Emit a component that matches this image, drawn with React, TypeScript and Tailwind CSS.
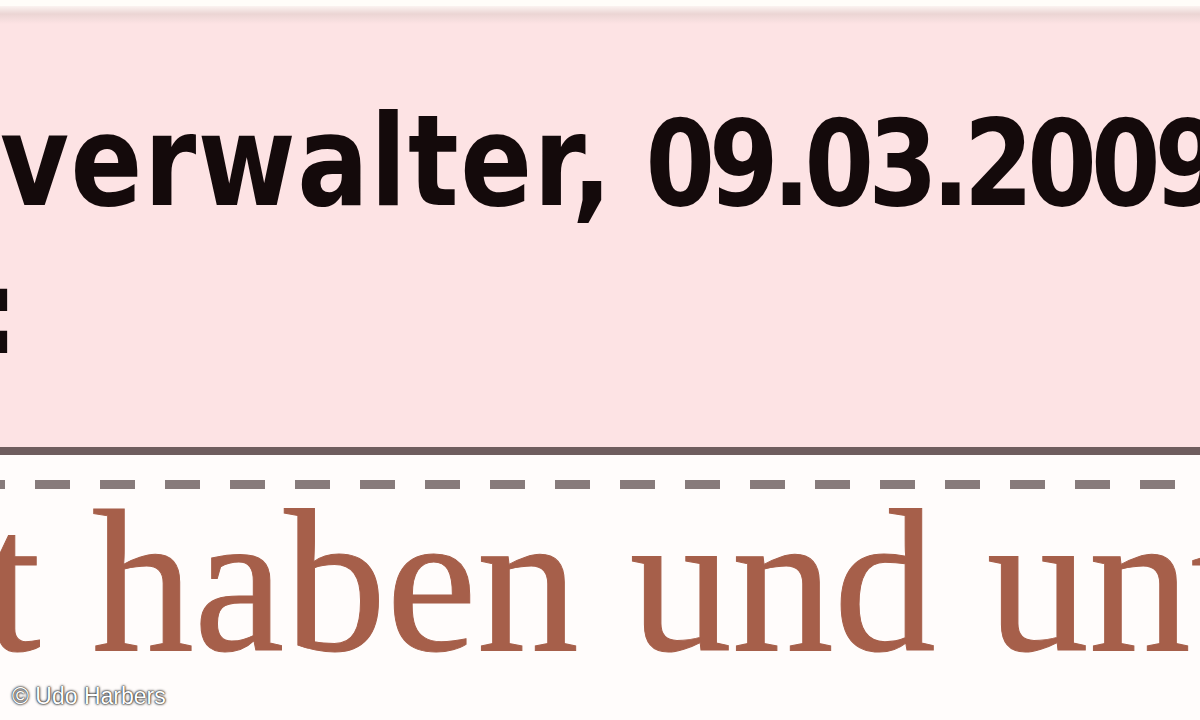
export default function App() {
  return (
    <div className="relative w-[1200px] h-[720px] overflow-hidden bg-[#fffcfb]">
      {/* top edge */}
      <div className="h-[6px] bg-[#fffdf9]" />
      <div className="h-[8px] bg-gradient-to-b from-[#fbf3f0] to-[#ebd5d4]" />
      <div className="h-[10px] bg-gradient-to-b from-[#ebd5d4] to-[#fde3e4]" />

      {/* pink header block */}
      <div className="h-[423px] bg-[#fde3e4] pt-[75px] font-['DejaVu_Sans',sans-serif] font-bold text-[#140a0b]">
        <div className="text-[100px] leading-none whitespace-nowrap origin-top scale-y-[1.19] [word-spacing:-3px]">
          <span className="text-[106px] tracking-[1.5px]">verwalter,</span> <span className="tracking-[-6px]">09.03.2009</span>
        </div>
        <div className="mt-[48px] w-[18px] flex justify-end">
          <span className="h-[118px] text-[118px] leading-none whitespace-nowrap origin-right scale-x-[0.85]">
            Betreff:
          </span>
        </div>
      </div>

      {/* rule */}
      <div className="h-[8px] bg-[#6f5d5e]" />

      {/* dashed separator */}
      <div className="mt-[25px] h-[9px] bg-[repeating-linear-gradient(90deg,#877b7b_0px,#877b7b_5px,transparent_5px,transparent_35px,#877b7b_35px,#877b7b_65px)]" />

      {/* body text */}
      <div className="mt-[27px] ml-[-16px] h-[130px] text-[204px] leading-[130px] whitespace-nowrap font-['Liberation_Serif',serif] text-[#a65f4a] [-webkit-text-stroke:1px_#a65f4a]">
        t haben und unter
      </div>

      {/* watermark */}
      <div className="absolute left-[12px] top-[683px] text-[23px] leading-[26px] font-['Liberation_Sans',sans-serif] text-white [text-shadow:0_0_3px_#222,0_0_2px_#333,0_0_1px_#444]">
        © Udo Harbers
      </div>
    </div>
  )
}
